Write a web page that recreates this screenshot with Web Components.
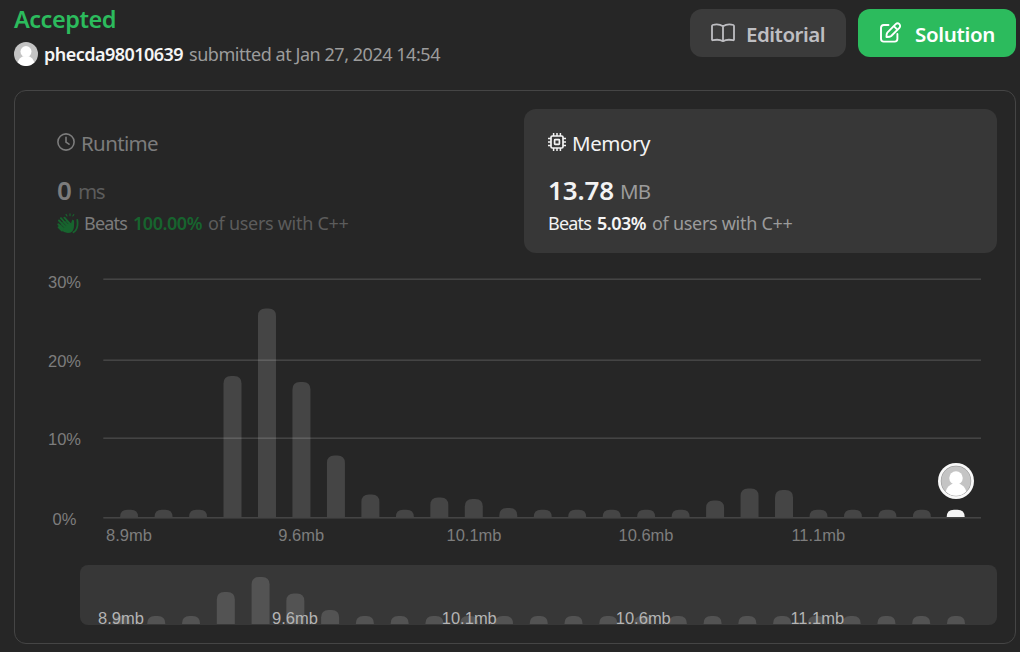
<!DOCTYPE html>
<html lang="en">
<head>
<meta charset="utf-8">
<title>Submission result</title>
<style>
  body { margin: 0; background: #262626; font-family: "Noto Sans", "Open Sans", sans-serif; }
</style>
</head>
<body>
<submission-page></submission-page>
<script>
const PERSON = `
  <circle cx="12" cy="12" r="12" fill="#c4c4c4"/>
  <circle cx="12" cy="9.6" r="5.5" fill="#fff"/>
  <path d="M3.6 20.6 C4.4 17.3 6.8 15.2 9 14.2 H15 C17.2 15.2 19.6 17.3 20.4 20.6 A12 12 0 0 1 3.6 20.6Z" fill="#fff"/>`;

const ICONS = {
  book: `<svg width="26" height="20" viewBox="0 0 26 20" fill="none" stroke="currentColor" stroke-width="1.8" stroke-linejoin="round" stroke-linecap="round"><path d="M13 3.2 C10.4 1.6 5.4 1.3 2.6 2 Q2 2.2 2 3 V16.4 Q2 17.4 3 17.2 C6.6 16.5 10.6 16.8 13 18.2 C15.4 16.8 19.4 16.5 23 17.2 Q24 17.4 24 16.4 V3 Q24 2.2 23.4 2 C20.6 1.3 15.6 1.6 13 3.2 Z V18"/></svg>`,
  edit: `<svg width="24" height="24" viewBox="-1 -.4 24 24" fill="none" stroke="currentColor" stroke-width="1.9" stroke-linejoin="round" stroke-linecap="round"><path d="M9.500 3.600 H4.800 Q2 3.600 2 6.400 V17.400 Q2 20.200 4.800 20.200 H15.600 Q18.400 20.200 18.400 17.400 V12.600"/><path d="M8.300 11.200 L16.700 2.800 A2.500 2.500 0 0 1 20.400 6.400 L12.200 14.600 Q10.800 15.700 7.500 15.600 Q7.300 12.500 8.300 11.200 Z M14.900 4.800 L18.300 8.200"/></svg>`,
  clock: `<svg width="18" height="18" viewBox="0 0 18 18" fill="none" stroke="currentColor" stroke-width="1.6" stroke-linecap="round" stroke-linejoin="round"><circle cx="9" cy="9" r="8.1"/><path d="M9 4.3 V9.2 L12 11.2"/></svg>`,
  chip: `<svg width="18" height="18" viewBox="0 0 18 18" fill="none" stroke="currentColor" stroke-width="1.7"><rect x="3" y="3" width="12" height="12" rx="1.3"/><rect x="6.6" y="6.6" width="4.8" height="4.8" rx=".6"/><path stroke-width="1.5" d="M5.6 0 V3 M9 0 V3 M12.4 0 V3 M5.6 15 V18 M9 15 V18 M12.4 15 V18 M0 5.6 H3 M0 9 H3 M0 12.4 H3 M15 5.6 H18 M15 9 H18 M15 12.4 H18"/></svg>`,
  clap: `<svg width="22" height="21" viewBox="0 0 22 21" fill="none" stroke="#17642e" stroke-linecap="round" stroke-linejoin="round"><path fill="#17642e" stroke="none" d="M5 9 L10.500 7.500 L14 10.500 L15.200 6.800 Q17.300 6.600 17.200 9 L16.900 14.500 Q16 20 10.800 20 Q7 20 4.500 17 L2 14 Z"/><path stroke-width="2" d="M1.400 11.200 L6 16 M2 7.500 L8 14 M3.900 5.200 L10 12 M7.400 4.700 L13 11 M1.700 14.300 L5 17.500"/><path stroke="#262626" stroke-width=".5" d="M2 9.700 L6.500 14.300 M3.300 6.700 L8.500 12.300 M6.200 5.500 L11 10.800"/><path stroke-width="1.800" d="M20.300 7 Q21.100 12 19.700 15.500 Q18.800 18 16.500 19.300"/><path stroke-width="1.100" d="M9 1.400 L10 3 M13 .8 V2.700 M16.800 1.600 L15.800 3"/></svg>`
};

const define = (name, cls) => customElements.define(name, cls);

/* Text run that is tracked so it spans exactly the width given in px. */
define('fit-text', class extends HTMLElement {
  connectedCallback() {
    const root = this.attachShadow({ mode: 'open' });
    root.innerHTML = `<style>:host{display:inline-block;white-space:nowrap;flex:none}</style><span><slot></slot></span>`;
    const w = +this.getAttribute('w');
    const natural = root.querySelector('span').getBoundingClientRect().width;
    const n = this.textContent.length;
    this.style.letterSpacing = ((w - natural) / n).toFixed(3) + 'px';
    this.style.width = w + 'px';
  }
});

define('ui-icon', class extends HTMLElement {
  connectedCallback() {
    this.attachShadow({ mode: 'open' }).innerHTML =
      `<style>:host{display:block;flex:none}svg{display:block}</style>${ICONS[this.getAttribute('name')]}`;
  }
});

define('user-avatar', class extends HTMLElement {
  connectedCallback() {
    this.attachShadow({ mode: 'open' }).innerHTML =
      `<style>:host{display:block;flex:none;width:24px;height:24px}svg{display:block}</style><svg width="24" height="24" viewBox="0 0 24 24">${PERSON}</svg>`;
  }
});

define('action-button', class extends HTMLElement {
  connectedCallback() {
    this.attachShadow({ mode: 'open' }).innerHTML = `<style>
      :host{display:flex;align-items:center;box-sizing:border-box;height:48px;border-radius:12px;
        padding:0 21px 0 20px;background:#3b3b3b;color:#bebec2;font-size:20.5px;font-weight:600;line-height:28px}
      :host([primary]){background:#2cbb5d;color:#fff}
      .label{margin-left:auto;padding-top:2px}
    </style><slot name="icon"></slot><span class="label"><slot></slot></span>`;
  }
});

define('metric-tab', class extends HTMLElement {
  connectedCallback() {
    this.attachShadow({ mode: 'open' }).innerHTML = `<style>
      :host{display:block;box-sizing:border-box;height:144px;border-radius:12px;padding:22px 24px 0;
        color:#7c7c7c;--muted:#5c5c5c;--strong:#17642e}
      :host([selected]){background:#373737;color:#f3f3f3;--muted:#9b9b9b;--strong:#f5f5f5}
      .row{display:flex}
      .title{height:24px;line-height:24px;font-size:20.5px}
      .title ::slotted(ui-icon){margin:2px 6px 0 0}
      .value{margin-top:19px;height:32px;line-height:32px;font-size:26px;font-weight:600}
      .unit{font-size:20.5px;line-height:34px;font-weight:400;color:var(--muted);margin-left:6px}
      .beats{margin-top:5px;height:24px;line-height:24px;font-size:18px}
      .beats ::slotted(ui-icon){margin:2px 5px 0 0}
      .pct{font-weight:600;color:var(--strong);margin:0 6px}
      .rest{color:var(--muted)}
    </style>
    <div class="row title"><slot name="icon"></slot><slot name="title"></slot></div>
    <div class="row value"><slot name="value"></slot><span class="unit"><slot name="unit"></slot></span></div>
    <div class="row beats"><slot name="badge"></slot><slot name="beats"></slot><span class="pct"><slot name="pct"></slot></span><span class="rest"><slot name="rest"></slot></span></div>`;
  }
});

/* Bar with a rounded top, standing on the base line. */
const bar = (cx, top, base, fill) => {
  const r = Math.min(7.5, base - top), l = cx - 9;
  return `<path fill="${fill}" d="M${l} ${base} V${top + r} Q${l} ${top} ${l + r} ${top} H${l + 18 - r} Q${l + 18} ${top} ${l + 18} ${top + r} V${base} Z"/>`;
};

define('memory-chart', class extends HTMLElement {
  connectedCallback() {
    const tops = [509.7,509.7,509.7,376,308.5,382,455.5,494.5,509.7,497.5,499,508,509.7,509.7,509.7,509.7,509.7,500.5,488.5,490,509.7,509.7,509.7,509.7,509.7];
    const grid = [[279.2,'30%',288],[360.2,'20%',367],[438.2,'10%',445],[517.8,'0%',525]];
    const ticks = [[129,'8.9mb'],[301.3,'9.6mb'],[474,'10.1mb'],[646,'10.6mb'],[818.3,'11.1mb']];
    this.attachShadow({ mode: 'open' }).innerHTML = `<style>
      :host{display:block}svg{display:block}
      text{font:16.5px "Liberation Sans",Arial,sans-serif;fill:#7d7d7d;text-anchor:middle}
    </style><svg width="1000" height="312" viewBox="15 253 1000 312">
      ${tops.map((t, i) => bar(129.1 + 34.47 * i - (i === 24 ? .7 : 0), t, 517, i === 24 ? '#f5f5f5' : '#454545')).join('')}
      ${grid.map(([y, s, b]) => `<rect x="103.3" y="${y - .75}" width="877.7" height="1.5" fill="#fff" fill-opacity=".15"/><text x="64.5" y="${b}">${s}</text>`).join('')}
      ${ticks.map(([x, s]) => `<text x="${x}" y="541">${s}</text>`).join('')}
      <circle cx="956" cy="481" r="18" fill="#f8f8f8"/>
      <circle cx="956" cy="481" r="15.2" fill="#8f8f8f"/>
      <g transform="translate(941.3 466.3) scale(1.225)">${PERSON}</g>
    </svg>`;
  }
});

define('range-preview', class extends HTMLElement {
  connectedCallback() {
    const tops = Array(25).fill(51);
    tops[3] = 27; tops[4] = 12; tops[5] = 28.5; tops[6] = 45;
    const ticks = [[41,'8.9mb'],[215,'9.6mb'],[389.3,'10.1mb'],[563.3,'10.6mb'],[737.3,'11.1mb']];
    this.attachShadow({ mode: 'open' }).innerHTML = `<style>
      :host{display:block;width:917px;height:60px;border-radius:8px;background:#373737;margin-left:65px}
      svg{display:block;overflow:visible}
      text{font:16.5px "Liberation Sans",Arial,sans-serif;fill:#b4b4b4;text-anchor:middle}
    </style><svg width="917" height="60" viewBox="0 0 917 60">
      ${tops.map((t, i) => bar(41.5 + 34.77 * i, t, 59, '#535353')).join('')}
      ${ticks.map(([x, s]) => `<text x="${x}" y="59">${s}</text>`).join('')}
    </svg>`;
  }
});

define('submission-page', class extends HTMLElement {
  connectedCallback() {
    this.attachShadow({ mode: 'open' }).innerHTML = `<style>
      :host{display:block;box-sizing:border-box;width:1020px;height:652px;padding:0 4px 0 14px;overflow:hidden}
      header{display:flex;justify-content:space-between;height:90px}
      h1{margin:0;height:42px;line-height:38px;font-size:23.5px;font-weight:600;color:#2cbb5d}
      .by{display:flex;height:24px;line-height:24px;font-size:18px;color:#9c9c9c}
      .by b{font-weight:600;color:#f5f5f5;margin:0 6px 0 6px}
      .actions{display:flex;gap:12px;padding-top:9px}
      .actions action-button{width:156px}
      .actions action-button[primary]{width:158px}
      .card{box-sizing:border-box;width:1002px;height:554px;border:1px solid #454545;border-radius:12px}
      .tabs{display:grid;grid-template-columns:473px 473px;gap:18px;padding:18px 18px 0}
    </style>
    <header>
      <div>
        <h1><fit-text w="102">Accepted</fit-text></h1>
        <div class="by"><user-avatar></user-avatar><b><fit-text w="139">phecda98010639</fit-text></b><fit-text w="251">submitted at Jan 27, 2024 14:54</fit-text></div>
      </div>
      <div class="actions">
        <action-button><ui-icon slot="icon" name="book"></ui-icon><fit-text w="79">Editorial</fit-text></action-button>
        <action-button primary><ui-icon slot="icon" name="edit"></ui-icon><fit-text w="80">Solution</fit-text></action-button>
      </div>
    </header>
    <section class="card">
      <div class="tabs">
        <metric-tab>
          <ui-icon slot="icon" name="clock"></ui-icon><fit-text slot="title" w="77">Runtime</fit-text>
          <fit-text slot="value" w="15">0</fit-text><fit-text slot="unit" w="26">ms</fit-text>
          <ui-icon slot="badge" name="clap"></ui-icon><fit-text slot="beats" w="43">Beats</fit-text><fit-text slot="pct" w="69">100.00%</fit-text><fit-text slot="rest" w="140.5">of users with C++</fit-text>
        </metric-tab>
        <metric-tab selected>
          <ui-icon slot="icon" name="chip"></ui-icon><fit-text slot="title" w="78">Memory</fit-text>
          <fit-text slot="value" w="66">13.78</fit-text><fit-text slot="unit" w="30">MB</fit-text>
          <fit-text slot="beats" w="43">Beats</fit-text><fit-text slot="pct" w="49">5.03%</fit-text><fit-text slot="rest" w="140.5">of users with C++</fit-text>
        </metric-tab>
      </div>
      <memory-chart></memory-chart>
      <range-preview></range-preview>
    </section>`;
  }
});
</script>
</body>
</html>
